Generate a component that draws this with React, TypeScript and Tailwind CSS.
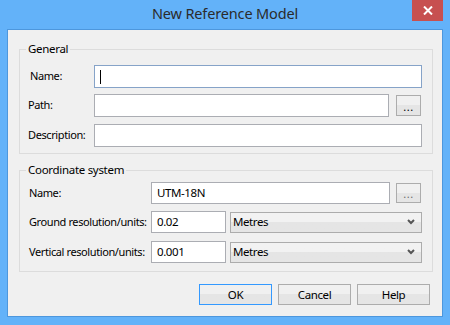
import React from 'react';

const font = { fontFamily: '"Noto Sans", "Open Sans", sans-serif' };

const TextBox: React.FC<{ value?: string; focused?: boolean; className?: string }> = ({ value, focused, className }) => (
  <div
    className={`h-full bg-white border flex items-center pl-[5px] text-[11.5px] text-black whitespace-nowrap ${
      focused ? 'border-[#86a3c8]' : 'border-[#abadb3]'
    } ${className ?? ''}`}
  >
    {focused && <span className="w-px h-[14px] bg-black" />}
    {value}
  </div>
);

const DotsButton: React.FC<{ dim?: boolean; className?: string }> = ({ dim, className }) => (
  <div
    className={`w-[25px] border border-[#acacac] bg-gradient-to-b from-[#f0f0f0] from-50% to-[#e5e5e5] to-50% flex items-end justify-center pb-[3px] text-[11px] leading-[11px] tracking-[0.5px] ${
      dim ? 'text-[#6d6d6d]' : 'text-black'
    } ${className ?? ''}`}
  >
    ...
  </div>
);

const Select: React.FC<{ value: string }> = ({ value }) => (
  <div className="flex-1 h-[21px] border border-[#acacac] bg-gradient-to-b from-[#f2f2f2] from-45% to-[#e5e5e5] to-45% flex items-center pl-[2px] pr-[6px] text-[11.5px] text-black">
    <span className="flex-1">{value}</span>
    <svg width="8" height="6" viewBox="0 0 8 6">
      <polyline points="1,1 4,4 7,1" fill="none" stroke="#555" strokeWidth="2" />
    </svg>
  </div>
);

const Button: React.FC<{ label: string; primary?: boolean }> = ({ label, primary }) => (
  <div
    className={`w-[73px] h-[21px] border flex items-center justify-center text-[11.5px] text-black bg-gradient-to-b from-[#f0f0f0] from-50% to-[#e5e5e5] to-50% ${
      primary ? 'border-[#3399ff]' : 'border-[#acacac]'
    }`}
  >
    {label}
  </div>
);

const App: React.FC = () => {
  return (
    <div className="w-[450px] h-[325px] bg-[#63b2f9] flex flex-col" style={font}>
      <div className="h-[29px] relative flex items-center justify-center shrink-0">
        <span className="text-[14.5px] text-[#2b2b2b] -mt-[1px] tracking-[-0.15px]">New Reference Model</span>
        <div className="absolute right-[7px] top-0 w-[31px] h-[21px] bg-[#c75050] flex items-center justify-center">
          <svg width="10" height="9" viewBox="0 0 10 9">
            <path d="M1 0.5 L9 8.5 M9 0.5 L1 8.5" stroke="white" strokeWidth="2" />
          </svg>
        </div>
      </div>

      <div className="ml-[7px] w-[436px] h-[288px] border border-[#4d97dd] bg-[#f0f0f0] text-[11px] tracking-[-0.4px] text-black whitespace-nowrap shrink-0">
        <fieldset className="ml-[11px] mt-[11px] w-[414px] border border-[#dcdcdc] pt-[8px] pb-[6px] pl-[8px] pr-[10px]">
          <legend className="-ml-[2px] px-[2px] leading-[16px] text-[11.5px] tracking-[-0.3px]">General</legend>
          <div className="flex items-center h-[23px]">
            <span className="w-[66px] pl-[2px]">Name:</span>
            <div className="flex-1 h-full">
              <TextBox focused />
            </div>
          </div>
          <div className="flex items-center h-[23px] mt-[6px]">
            <span className="w-[66px]">Path:</span>
            <div className="flex-1 h-full">
              <TextBox />
            </div>
            <DotsButton className="h-[21px] ml-[7px] mr-[1px]" />
          </div>
          <div className="flex items-center h-[23px] mt-[7px]">
            <span className="w-[66px]">Description:</span>
            <div className="flex-1 h-full">
              <TextBox />
            </div>
          </div>
        </fieldset>

        <fieldset className="ml-[11px] mt-[8px] w-[414px] border border-[#dcdcdc] pt-[4px] pb-[8px] pl-[9px] pr-[10px]">
          <legend className="-ml-[3px] px-[2px] leading-[16px] text-[11.5px] tracking-[-0.3px]">Coordinate system</legend>
          <div className="flex items-center h-[22px]">
            <span className="w-[122px]">Name:</span>
            <div className="flex-1 h-full">
              <TextBox value="UTM-18N" />
            </div>
            <DotsButton dim className="h-[20px] ml-[6px] mr-[1px]" />
          </div>
          <div className="flex items-center h-[22px] mt-[7px]">
            <span className="w-[122px]">Ground resolution/units:</span>
            <div className="w-[75px] h-full mr-[4px]">
              <TextBox value="0.02" />
            </div>
            <Select value="Metres" />
          </div>
          <div className="flex items-center h-[22px] mt-[8px]">
            <span className="w-[122px]">Vertical resolution/units:</span>
            <div className="w-[75px] h-full mr-[4px]">
              <TextBox value="0.001" />
            </div>
            <Select value="Metres" />
          </div>
        </fieldset>

        <div className="flex justify-end gap-[6px] mt-[12px] pr-[12px]">
          <Button label="OK" primary />
          <Button label="Cancel" />
          <Button label="Help" />
        </div>
      </div>
    </div>
  );
};

export default App;
